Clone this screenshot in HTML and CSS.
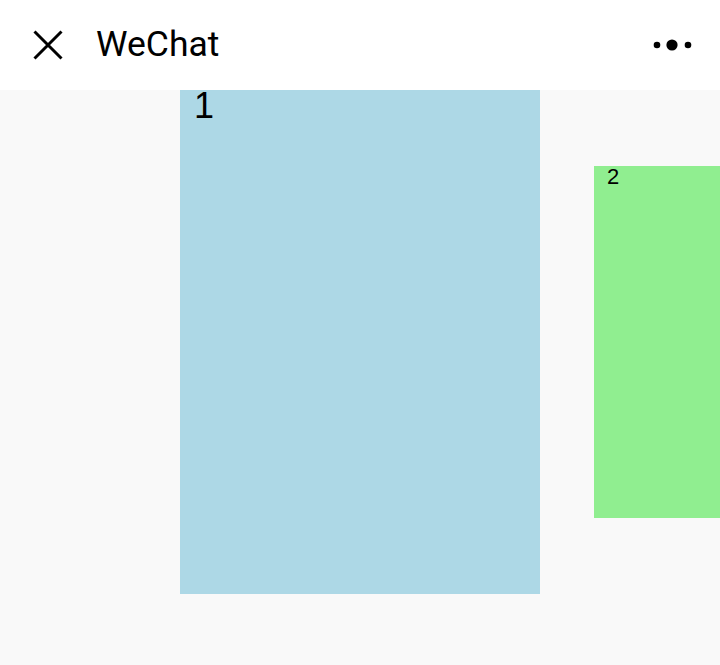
FILE: index.html
```html
<!DOCTYPE html>
<html>
<head>
<meta charset="utf-8">
<link rel="stylesheet" href="styles.css">
</head>
<body>
<header class="topbar">
  <svg class="close" width="30" height="30" viewBox="0 0 30 30"><path d="M1.5 1.5 L28.5 28.5 M28.5 1.5 L1.5 28.5" stroke="#000" stroke-width="3" fill="none"/></svg>
  <div class="title">WeChat</div>
  <svg class="more" width="40" height="12" viewBox="0 0 40 12"><circle cx="5" cy="6" r="3.3" fill="#000"/><circle cx="20" cy="6" r="5.6" fill="#000"/><circle cx="36" cy="6" r="3.3" fill="#000"/></svg>
</header>
<main class="stage">
  <div class="track">
    <div class="slide slide-active"><span class="label">1</span></div>
    <div class="slide slide-next"><span class="label">2</span></div>
  </div>
</main>
</body>
</html>
```
FILE: styles.css
```css
html, body { margin: 0; padding: 0; }
body {
  width: 720px;
  height: 665px;
  overflow: hidden;
  background: #f9f9f9;
  font-family: "Liberation Sans", Arial, sans-serif;
}
.topbar {
  height: 90px;
  background: #fff;
  display: flex;
  align-items: center;
  padding: 0 32px 0 33px;
  box-sizing: border-box;
}
.close { flex: none; }
.title {
  font-family: Roboto, "Noto Sans", sans-serif;
  font-size: 35.5px;
  color: #000;
  margin-left: 33px;
  flex: 1;
  margin-top: -2px;
}
.more { flex: none; margin-right: -4px; }
.stage {
  height: 575px;
}
.track {
  display: flex;
  align-items: center;
  gap: 54px;
  padding-left: 180px;
  height: 504px;
}
.slide {
  flex: none;
  box-sizing: border-box;
  color: #000;
}
.slide-active {
  width: 360px;
  height: 504px;
  background: #add8e6;
  font-size: 36px;
  line-height: 32px;
  padding-left: 14px;
}
.slide-next {
  width: 126px;
  height: 352px;
  background: #90ee90;
  font-size: 22px;
  line-height: 22px;
  padding-left: 13px;
}
.label { display: inline-block; }
```
